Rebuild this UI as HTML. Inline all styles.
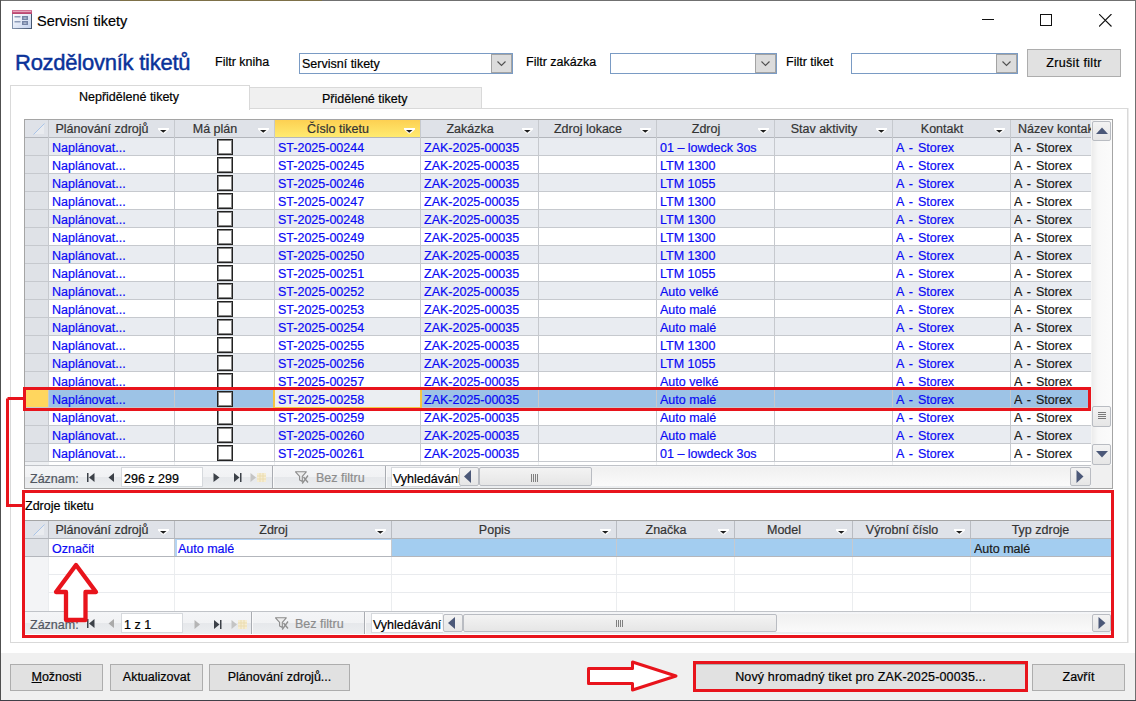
<!DOCTYPE html>
<html><head><meta charset="utf-8">
<style>
*{box-sizing:border-box;margin:0;padding:0}
html,body{width:1136px;height:701px;overflow:hidden;background:#fff}
body{position:relative;font-family:"Liberation Sans", sans-serif;font-size:12.5px;color:#000;-webkit-text-stroke:0.2px currentColor}
.a{position:absolute}
.t{position:absolute;white-space:nowrap;line-height:14px}
.combo{position:absolute;border:1px solid #7a9bc4;background:#fff;height:21px}
.dd{position:absolute;right:0;top:0;width:21px;height:19px;background:#dcdcdc;border:1px solid #a3a3a3}
.btn{position:absolute;background:#e1e1e1;border:1px solid #adadad;text-align:center;white-space:nowrap}
.hdr{position:absolute;top:120px;height:17px;background:#dfe2e8;overflow:hidden}
.ht{position:absolute;top:1px;line-height:14px;white-space:nowrap;color:#333;text-align:center}
.c{position:absolute;line-height:14px;white-space:nowrap;overflow:hidden;color:#1a1a1a}
.l{color:#0a0af5}
.vl{position:absolute;width:1px}
.hl{position:absolute;height:1px}
</style></head><body>

<div class="a" style="left:0;top:0;width:1136px;height:1px;background:#707070"></div>
<div class="a" style="left:120px;top:0;width:202px;height:1px;background:#7d7048"></div>
<div class="a" style="left:0;top:0;width:1px;height:701px;background:#505050"></div>
<div class="a" style="left:1135px;top:0;width:1px;height:701px;background:#707070"></div>
<div class="a" style="left:0;top:700px;width:1136px;height:1px;background:#404048"></div>
<svg class="a" style="left:12px;top:10px" width="20" height="19" viewBox="0 0 20 19">
<defs><linearGradient id="ig" x1="0" y1="0" x2="1" y2="1"><stop offset="0" stop-color="#ffffff"/><stop offset="1" stop-color="#c4d2ee"/></linearGradient>
<linearGradient id="ih" x1="0" y1="0" x2="0" y2="1"><stop offset="0" stop-color="#d77a9c"/><stop offset="1" stop-color="#b8426c"/></linearGradient>
<linearGradient id="if" x1="0" y1="0" x2="1" y2="0"><stop offset="0" stop-color="#8393ad"/><stop offset="1" stop-color="#44546e"/></linearGradient></defs>
<rect x="0" y="0" width="20" height="19" fill="url(#if)"/>
<rect x="1" y="4" width="18" height="14" fill="url(#ig)"/>
<rect x="0" y="0" width="20" height="4" fill="url(#ih)"/>
<rect x="1" y="1" width="18" height="1" fill="#e6a6bd"/>
<rect x="2.5" y="6" width="6" height="1.5" fill="#8d9bb8"/>
<rect x="2.5" y="11" width="6" height="1.5" fill="#8d9bb8"/>
<rect x="10" y="6" width="6" height="4" fill="#7584a6"/>
<rect x="11.5" y="7.5" width="3" height="1.2" fill="#c0cadd"/>
<rect x="10" y="11" width="6" height="4" fill="#7584a6"/>
<rect x="11.5" y="12.5" width="3" height="1.2" fill="#c0cadd"/>
</svg>
<div class="t" style="left:37px;top:13px;font-size:14.5px;line-height:16px">Servisní tikety</div>
<div class="a" style="left:982px;top:19px;width:12px;height:1px;background:#111"></div>
<div class="a" style="left:1040px;top:14px;width:12px;height:12px;border:1px solid #111"></div>
<svg class="a" style="left:1099px;top:14px" width="13" height="13" viewBox="0 0 13 13"><path d="M0 0L12.5 12.5M12.5 0L0 12.5" stroke="#111" stroke-width="1.1"/></svg>
<div class="t" style="left:15px;top:51px;font-size:22px;letter-spacing:-0.25px;line-height:24px;color:#0a3299;-webkit-text-stroke:0.45px #0a3299">Rozdělovník tiketů</div>
<div class="t" style="left:215px;top:55px">Filtr kniha</div>
<div class="combo" style="left:299px;top:53px;width:214px">
<div class="t" style="left:2px;top:3px">Servisní tikety</div>
<div class="dd"><svg width="19" height="19" viewBox="0 0 19 19" style="position:absolute;left:0;top:0"><path d="M5.5 6.5l4 4 4-4" fill="none" stroke="#505050" stroke-width="1.1"/></svg></div></div>
<div class="t" style="left:526px;top:55px">Filtr zakázka</div>
<div class="combo" style="left:610px;top:53px;width:167px">
<div class="dd"><svg width="19" height="19" viewBox="0 0 19 19" style="position:absolute;left:0;top:0"><path d="M5.5 6.5l4 4 4-4" fill="none" stroke="#505050" stroke-width="1.1"/></svg></div></div>
<div class="t" style="left:786px;top:55px">Filtr tiket</div>
<div class="combo" style="left:851px;top:53px;width:167px">
<div class="dd"><svg width="19" height="19" viewBox="0 0 19 19" style="position:absolute;left:0;top:0"><path d="M5.5 6.5l4 4 4-4" fill="none" stroke="#505050" stroke-width="1.1"/></svg></div></div>
<div class="btn" style="left:1027px;top:49px;width:94px;height:28px;line-height:26px;letter-spacing:0.35px">Zrušit filtr</div>
<div class="a" style="left:249px;top:87px;width:233px;height:22px;background:#f0f0f0;border:1px solid #d9d9d9;border-bottom:none"></div>
<div class="t" style="left:322px;top:92px">Přidělené tikety</div>
<div class="a" style="left:10px;top:108px;width:1118px;height:535px;border:1px solid #d9d9d9;background:#fff"></div>
<div class="a" style="left:1128px;top:108px;width:1px;height:535px;background:#ececec"></div>
<div class="a" style="left:10px;top:85px;width:240px;height:25px;border:1px solid #d9d9d9;border-bottom:none;background:#fff"></div>
<div class="t" style="left:79px;top:90px">Nepřidělené tikety</div>
<div class="a" style="left:24px;top:119px;width:1089px;height:370px;border:1px solid #a5a5a5;background:#fff"></div>
<div class="hdr" style="left:25px;width:23px"></div>
<svg class="a" style="left:32px;top:123px" width="14" height="12" viewBox="0 0 14 12"><path d="M12 1V11H2Z" fill="#e9ebef"/><path d="M12.5 0.5L1.5 11.5" stroke="#a9c4e8" stroke-width="1"/></svg>
<div class="hdr" style="left:49px;width:125px;background:#dfe2e8"></div>
<div class="ht" style="left:48px;top:122px;width:108px">Plánování zdrojů</div>
<svg class="a" style="left:158px;top:128px" width="11" height="6" viewBox="0 0 11 6"><path d="M0 0H11V1.5L6.5 5.5H4.5L0 1.5Z" fill="#fff"/><path d="M2 2H8.5L5.25 4.8Z" fill="#1e1e1e"/></svg>
<div class="hdr" style="left:175px;width:99px;background:#dfe2e8"></div>
<div class="ht" style="left:174px;top:122px;width:82px">Má plán</div>
<svg class="a" style="left:258px;top:128px" width="11" height="6" viewBox="0 0 11 6"><path d="M0 0H11V1.5L6.5 5.5H4.5L0 1.5Z" fill="#fff"/><path d="M2 2H8.5L5.25 4.8Z" fill="#1e1e1e"/></svg>
<div class="hdr" style="left:275px;width:145px;background:linear-gradient(#fdd052,#ffeb70)"></div>
<div class="ht" style="left:274px;top:122px;width:128px">Číslo tiketu</div>
<svg class="a" style="left:404px;top:128px" width="11" height="6" viewBox="0 0 11 6"><path d="M0 0H11V1.5L6.5 5.5H4.5L0 1.5Z" fill="#fff"/><path d="M2 2H8.5L5.25 4.8Z" fill="#1e1e1e"/></svg>
<div class="hdr" style="left:421px;width:117px;background:#dfe2e8"></div>
<div class="ht" style="left:420px;top:122px;width:100px">Zakázka</div>
<svg class="a" style="left:522px;top:128px" width="11" height="6" viewBox="0 0 11 6"><path d="M0 0H11V1.5L6.5 5.5H4.5L0 1.5Z" fill="#fff"/><path d="M2 2H8.5L5.25 4.8Z" fill="#1e1e1e"/></svg>
<div class="hdr" style="left:539px;width:117px;background:#dfe2e8"></div>
<div class="ht" style="left:538px;top:122px;width:100px">Zdroj lokace</div>
<svg class="a" style="left:640px;top:128px" width="11" height="6" viewBox="0 0 11 6"><path d="M0 0H11V1.5L6.5 5.5H4.5L0 1.5Z" fill="#fff"/><path d="M2 2H8.5L5.25 4.8Z" fill="#1e1e1e"/></svg>
<div class="hdr" style="left:657px;width:117px;background:#dfe2e8"></div>
<div class="ht" style="left:656px;top:122px;width:100px">Zdroj</div>
<svg class="a" style="left:758px;top:128px" width="11" height="6" viewBox="0 0 11 6"><path d="M0 0H11V1.5L6.5 5.5H4.5L0 1.5Z" fill="#fff"/><path d="M2 2H8.5L5.25 4.8Z" fill="#1e1e1e"/></svg>
<div class="hdr" style="left:775px;width:117px;background:#dfe2e8"></div>
<div class="ht" style="left:774px;top:122px;width:100px">Stav aktivity</div>
<svg class="a" style="left:876px;top:128px" width="11" height="6" viewBox="0 0 11 6"><path d="M0 0H11V1.5L6.5 5.5H4.5L0 1.5Z" fill="#fff"/><path d="M2 2H8.5L5.25 4.8Z" fill="#1e1e1e"/></svg>
<div class="hdr" style="left:893px;width:117px;background:#dfe2e8"></div>
<div class="ht" style="left:892px;top:122px;width:100px">Kontakt</div>
<svg class="a" style="left:994px;top:128px" width="11" height="6" viewBox="0 0 11 6"><path d="M0 0H11V1.5L6.5 5.5H4.5L0 1.5Z" fill="#fff"/><path d="M2 2H8.5L5.25 4.8Z" fill="#1e1e1e"/></svg>
<div class="hdr" style="left:1011px;width:80px;background:#dfe2e8"></div>
<div class="ht" style="left:1018px;top:122px;">Název kontaktu</div>
<div class="a" style="left:1091px;top:120px;width:21px;height:345px;background:#f4f4f4"></div>
<div class="hl" style="left:25px;top:137px;width:1066px;background:#b3b6bc"></div>
<div class="a" style="left:49px;top:138px;width:1042px;height:17px;background:#e9ecf1"></div>
<div class="a" style="left:25px;top:138px;width:23px;height:17px;background:#dfe2e7"></div>
<div class="hl" style="left:25px;top:155px;width:1066px;background:#c6c9ce"></div>
<div class="c l" style="left:52px;top:141px;width:122px">Naplánovat...</div>
<div class="a" style="left:217px;top:139px;width:16px;height:16px;border:1px solid #222;box-shadow:inset 0 0 0 1px rgba(40,40,40,0.55);background:#fff"></div>
<div class="c l" style="left:278px;top:141px;width:142px">ST-2025-00244</div>
<div class="c l" style="left:424px;top:141px;width:114px">ZAK-2025-00035</div>
<div class="c l" style="left:660px;top:141px;width:114px">01 – lowdeck 3os</div>
<div class="c l" style="left:896px;top:141px;width:114px"><span style="word-spacing:1.6px">A - Storex</span></div>
<div class="c" style="left:1014px;top:141px;width:77px"><span style="word-spacing:1.6px">A - Storex</span></div>
<div class="a" style="left:49px;top:156px;width:1042px;height:17px;background:#ffffff"></div>
<div class="a" style="left:25px;top:156px;width:23px;height:17px;background:#dfe2e7"></div>
<div class="hl" style="left:25px;top:173px;width:1066px;background:#c6c9ce"></div>
<div class="c l" style="left:52px;top:159px;width:122px">Naplánovat...</div>
<div class="a" style="left:217px;top:157px;width:16px;height:16px;border:1px solid #222;box-shadow:inset 0 0 0 1px rgba(40,40,40,0.55);background:#fff"></div>
<div class="c l" style="left:278px;top:159px;width:142px">ST-2025-00245</div>
<div class="c l" style="left:424px;top:159px;width:114px">ZAK-2025-00035</div>
<div class="c l" style="left:660px;top:159px;width:114px">LTM 1300</div>
<div class="c l" style="left:896px;top:159px;width:114px"><span style="word-spacing:1.6px">A - Storex</span></div>
<div class="c" style="left:1014px;top:159px;width:77px"><span style="word-spacing:1.6px">A - Storex</span></div>
<div class="a" style="left:49px;top:174px;width:1042px;height:17px;background:#e9ecf1"></div>
<div class="a" style="left:25px;top:174px;width:23px;height:17px;background:#dfe2e7"></div>
<div class="hl" style="left:25px;top:191px;width:1066px;background:#c6c9ce"></div>
<div class="c l" style="left:52px;top:177px;width:122px">Naplánovat...</div>
<div class="a" style="left:217px;top:175px;width:16px;height:16px;border:1px solid #222;box-shadow:inset 0 0 0 1px rgba(40,40,40,0.55);background:#fff"></div>
<div class="c l" style="left:278px;top:177px;width:142px">ST-2025-00246</div>
<div class="c l" style="left:424px;top:177px;width:114px">ZAK-2025-00035</div>
<div class="c l" style="left:660px;top:177px;width:114px">LTM 1055</div>
<div class="c l" style="left:896px;top:177px;width:114px"><span style="word-spacing:1.6px">A - Storex</span></div>
<div class="c" style="left:1014px;top:177px;width:77px"><span style="word-spacing:1.6px">A - Storex</span></div>
<div class="a" style="left:49px;top:192px;width:1042px;height:17px;background:#ffffff"></div>
<div class="a" style="left:25px;top:192px;width:23px;height:17px;background:#dfe2e7"></div>
<div class="hl" style="left:25px;top:209px;width:1066px;background:#c6c9ce"></div>
<div class="c l" style="left:52px;top:195px;width:122px">Naplánovat...</div>
<div class="a" style="left:217px;top:193px;width:16px;height:16px;border:1px solid #222;box-shadow:inset 0 0 0 1px rgba(40,40,40,0.55);background:#fff"></div>
<div class="c l" style="left:278px;top:195px;width:142px">ST-2025-00247</div>
<div class="c l" style="left:424px;top:195px;width:114px">ZAK-2025-00035</div>
<div class="c l" style="left:660px;top:195px;width:114px">LTM 1300</div>
<div class="c l" style="left:896px;top:195px;width:114px"><span style="word-spacing:1.6px">A - Storex</span></div>
<div class="c" style="left:1014px;top:195px;width:77px"><span style="word-spacing:1.6px">A - Storex</span></div>
<div class="a" style="left:49px;top:210px;width:1042px;height:17px;background:#e9ecf1"></div>
<div class="a" style="left:25px;top:210px;width:23px;height:17px;background:#dfe2e7"></div>
<div class="hl" style="left:25px;top:227px;width:1066px;background:#c6c9ce"></div>
<div class="c l" style="left:52px;top:213px;width:122px">Naplánovat...</div>
<div class="a" style="left:217px;top:211px;width:16px;height:16px;border:1px solid #222;box-shadow:inset 0 0 0 1px rgba(40,40,40,0.55);background:#fff"></div>
<div class="c l" style="left:278px;top:213px;width:142px">ST-2025-00248</div>
<div class="c l" style="left:424px;top:213px;width:114px">ZAK-2025-00035</div>
<div class="c l" style="left:660px;top:213px;width:114px">LTM 1300</div>
<div class="c l" style="left:896px;top:213px;width:114px"><span style="word-spacing:1.6px">A - Storex</span></div>
<div class="c" style="left:1014px;top:213px;width:77px"><span style="word-spacing:1.6px">A - Storex</span></div>
<div class="a" style="left:49px;top:228px;width:1042px;height:17px;background:#ffffff"></div>
<div class="a" style="left:25px;top:228px;width:23px;height:17px;background:#dfe2e7"></div>
<div class="hl" style="left:25px;top:245px;width:1066px;background:#c6c9ce"></div>
<div class="c l" style="left:52px;top:231px;width:122px">Naplánovat...</div>
<div class="a" style="left:217px;top:229px;width:16px;height:16px;border:1px solid #222;box-shadow:inset 0 0 0 1px rgba(40,40,40,0.55);background:#fff"></div>
<div class="c l" style="left:278px;top:231px;width:142px">ST-2025-00249</div>
<div class="c l" style="left:424px;top:231px;width:114px">ZAK-2025-00035</div>
<div class="c l" style="left:660px;top:231px;width:114px">LTM 1300</div>
<div class="c l" style="left:896px;top:231px;width:114px"><span style="word-spacing:1.6px">A - Storex</span></div>
<div class="c" style="left:1014px;top:231px;width:77px"><span style="word-spacing:1.6px">A - Storex</span></div>
<div class="a" style="left:49px;top:246px;width:1042px;height:17px;background:#e9ecf1"></div>
<div class="a" style="left:25px;top:246px;width:23px;height:17px;background:#dfe2e7"></div>
<div class="hl" style="left:25px;top:263px;width:1066px;background:#c6c9ce"></div>
<div class="c l" style="left:52px;top:249px;width:122px">Naplánovat...</div>
<div class="a" style="left:217px;top:247px;width:16px;height:16px;border:1px solid #222;box-shadow:inset 0 0 0 1px rgba(40,40,40,0.55);background:#fff"></div>
<div class="c l" style="left:278px;top:249px;width:142px">ST-2025-00250</div>
<div class="c l" style="left:424px;top:249px;width:114px">ZAK-2025-00035</div>
<div class="c l" style="left:660px;top:249px;width:114px">LTM 1300</div>
<div class="c l" style="left:896px;top:249px;width:114px"><span style="word-spacing:1.6px">A - Storex</span></div>
<div class="c" style="left:1014px;top:249px;width:77px"><span style="word-spacing:1.6px">A - Storex</span></div>
<div class="a" style="left:49px;top:264px;width:1042px;height:17px;background:#ffffff"></div>
<div class="a" style="left:25px;top:264px;width:23px;height:17px;background:#dfe2e7"></div>
<div class="hl" style="left:25px;top:281px;width:1066px;background:#c6c9ce"></div>
<div class="c l" style="left:52px;top:267px;width:122px">Naplánovat...</div>
<div class="a" style="left:217px;top:265px;width:16px;height:16px;border:1px solid #222;box-shadow:inset 0 0 0 1px rgba(40,40,40,0.55);background:#fff"></div>
<div class="c l" style="left:278px;top:267px;width:142px">ST-2025-00251</div>
<div class="c l" style="left:424px;top:267px;width:114px">ZAK-2025-00035</div>
<div class="c l" style="left:660px;top:267px;width:114px">LTM 1055</div>
<div class="c l" style="left:896px;top:267px;width:114px"><span style="word-spacing:1.6px">A - Storex</span></div>
<div class="c" style="left:1014px;top:267px;width:77px"><span style="word-spacing:1.6px">A - Storex</span></div>
<div class="a" style="left:49px;top:282px;width:1042px;height:17px;background:#e9ecf1"></div>
<div class="a" style="left:25px;top:282px;width:23px;height:17px;background:#dfe2e7"></div>
<div class="hl" style="left:25px;top:299px;width:1066px;background:#c6c9ce"></div>
<div class="c l" style="left:52px;top:285px;width:122px">Naplánovat...</div>
<div class="a" style="left:217px;top:283px;width:16px;height:16px;border:1px solid #222;box-shadow:inset 0 0 0 1px rgba(40,40,40,0.55);background:#fff"></div>
<div class="c l" style="left:278px;top:285px;width:142px">ST-2025-00252</div>
<div class="c l" style="left:424px;top:285px;width:114px">ZAK-2025-00035</div>
<div class="c l" style="left:660px;top:285px;width:114px">Auto velké</div>
<div class="c l" style="left:896px;top:285px;width:114px"><span style="word-spacing:1.6px">A - Storex</span></div>
<div class="c" style="left:1014px;top:285px;width:77px"><span style="word-spacing:1.6px">A - Storex</span></div>
<div class="a" style="left:49px;top:300px;width:1042px;height:17px;background:#ffffff"></div>
<div class="a" style="left:25px;top:300px;width:23px;height:17px;background:#dfe2e7"></div>
<div class="hl" style="left:25px;top:317px;width:1066px;background:#c6c9ce"></div>
<div class="c l" style="left:52px;top:303px;width:122px">Naplánovat...</div>
<div class="a" style="left:217px;top:301px;width:16px;height:16px;border:1px solid #222;box-shadow:inset 0 0 0 1px rgba(40,40,40,0.55);background:#fff"></div>
<div class="c l" style="left:278px;top:303px;width:142px">ST-2025-00253</div>
<div class="c l" style="left:424px;top:303px;width:114px">ZAK-2025-00035</div>
<div class="c l" style="left:660px;top:303px;width:114px">Auto malé</div>
<div class="c l" style="left:896px;top:303px;width:114px"><span style="word-spacing:1.6px">A - Storex</span></div>
<div class="c" style="left:1014px;top:303px;width:77px"><span style="word-spacing:1.6px">A - Storex</span></div>
<div class="a" style="left:49px;top:318px;width:1042px;height:17px;background:#e9ecf1"></div>
<div class="a" style="left:25px;top:318px;width:23px;height:17px;background:#dfe2e7"></div>
<div class="hl" style="left:25px;top:335px;width:1066px;background:#c6c9ce"></div>
<div class="c l" style="left:52px;top:321px;width:122px">Naplánovat...</div>
<div class="a" style="left:217px;top:319px;width:16px;height:16px;border:1px solid #222;box-shadow:inset 0 0 0 1px rgba(40,40,40,0.55);background:#fff"></div>
<div class="c l" style="left:278px;top:321px;width:142px">ST-2025-00254</div>
<div class="c l" style="left:424px;top:321px;width:114px">ZAK-2025-00035</div>
<div class="c l" style="left:660px;top:321px;width:114px">Auto malé</div>
<div class="c l" style="left:896px;top:321px;width:114px"><span style="word-spacing:1.6px">A - Storex</span></div>
<div class="c" style="left:1014px;top:321px;width:77px"><span style="word-spacing:1.6px">A - Storex</span></div>
<div class="a" style="left:49px;top:336px;width:1042px;height:17px;background:#ffffff"></div>
<div class="a" style="left:25px;top:336px;width:23px;height:17px;background:#dfe2e7"></div>
<div class="hl" style="left:25px;top:353px;width:1066px;background:#c6c9ce"></div>
<div class="c l" style="left:52px;top:339px;width:122px">Naplánovat...</div>
<div class="a" style="left:217px;top:337px;width:16px;height:16px;border:1px solid #222;box-shadow:inset 0 0 0 1px rgba(40,40,40,0.55);background:#fff"></div>
<div class="c l" style="left:278px;top:339px;width:142px">ST-2025-00255</div>
<div class="c l" style="left:424px;top:339px;width:114px">ZAK-2025-00035</div>
<div class="c l" style="left:660px;top:339px;width:114px">LTM 1300</div>
<div class="c l" style="left:896px;top:339px;width:114px"><span style="word-spacing:1.6px">A - Storex</span></div>
<div class="c" style="left:1014px;top:339px;width:77px"><span style="word-spacing:1.6px">A - Storex</span></div>
<div class="a" style="left:49px;top:354px;width:1042px;height:17px;background:#e9ecf1"></div>
<div class="a" style="left:25px;top:354px;width:23px;height:17px;background:#dfe2e7"></div>
<div class="hl" style="left:25px;top:371px;width:1066px;background:#c6c9ce"></div>
<div class="c l" style="left:52px;top:357px;width:122px">Naplánovat...</div>
<div class="a" style="left:217px;top:355px;width:16px;height:16px;border:1px solid #222;box-shadow:inset 0 0 0 1px rgba(40,40,40,0.55);background:#fff"></div>
<div class="c l" style="left:278px;top:357px;width:142px">ST-2025-00256</div>
<div class="c l" style="left:424px;top:357px;width:114px">ZAK-2025-00035</div>
<div class="c l" style="left:660px;top:357px;width:114px">LTM 1055</div>
<div class="c l" style="left:896px;top:357px;width:114px"><span style="word-spacing:1.6px">A - Storex</span></div>
<div class="c" style="left:1014px;top:357px;width:77px"><span style="word-spacing:1.6px">A - Storex</span></div>
<div class="a" style="left:49px;top:372px;width:1042px;height:17px;background:#ffffff"></div>
<div class="a" style="left:25px;top:372px;width:23px;height:17px;background:#dfe2e7"></div>
<div class="hl" style="left:25px;top:389px;width:1066px;background:#c6c9ce"></div>
<div class="c l" style="left:52px;top:375px;width:122px">Naplánovat...</div>
<div class="a" style="left:217px;top:373px;width:16px;height:16px;border:1px solid #222;box-shadow:inset 0 0 0 1px rgba(40,40,40,0.55);background:#fff"></div>
<div class="c l" style="left:278px;top:375px;width:142px">ST-2025-00257</div>
<div class="c l" style="left:424px;top:375px;width:114px">ZAK-2025-00035</div>
<div class="c l" style="left:660px;top:375px;width:114px">Auto velké</div>
<div class="c l" style="left:896px;top:375px;width:114px"><span style="word-spacing:1.6px">A - Storex</span></div>
<div class="c" style="left:1014px;top:375px;width:77px"><span style="word-spacing:1.6px">A - Storex</span></div>
<div class="a" style="left:49px;top:390px;width:1042px;height:17px;background:#9dc3e6"></div>
<div class="a" style="left:25px;top:390px;width:23px;height:17px;background:#ffd65e"></div>
<div class="hl" style="left:25px;top:407px;width:1066px;background:#c6c9ce"></div>
<div class="c l" style="left:52px;top:393px;width:122px">Naplánovat...</div>
<div class="a" style="left:217px;top:391px;width:16px;height:16px;border:1px solid #222;box-shadow:inset 0 0 0 1px rgba(40,40,40,0.55);background:#fff"></div>
<div class="a" style="left:274px;top:390px;width:146px;height:18px;background:#ebeef2"></div>
<div class="c l" style="left:278px;top:393px;width:142px">ST-2025-00258</div>
<div class="c l" style="left:424px;top:393px;width:114px">ZAK-2025-00035</div>
<div class="c l" style="left:660px;top:393px;width:114px">Auto malé</div>
<div class="c l" style="left:896px;top:393px;width:114px"><span style="word-spacing:1.6px">A - Storex</span></div>
<div class="c" style="left:1014px;top:393px;width:77px"><span style="word-spacing:1.6px">A - Storex</span></div>
<div class="a" style="left:49px;top:408px;width:1042px;height:17px;background:#ffffff"></div>
<div class="a" style="left:25px;top:408px;width:23px;height:17px;background:#dfe2e7"></div>
<div class="hl" style="left:25px;top:425px;width:1066px;background:#c6c9ce"></div>
<div class="c l" style="left:52px;top:411px;width:122px">Naplánovat...</div>
<div class="a" style="left:217px;top:409px;width:16px;height:16px;border:1px solid #222;box-shadow:inset 0 0 0 1px rgba(40,40,40,0.55);background:#fff"></div>
<div class="c l" style="left:278px;top:411px;width:142px">ST-2025-00259</div>
<div class="c l" style="left:424px;top:411px;width:114px">ZAK-2025-00035</div>
<div class="c l" style="left:660px;top:411px;width:114px">Auto malé</div>
<div class="c l" style="left:896px;top:411px;width:114px"><span style="word-spacing:1.6px">A - Storex</span></div>
<div class="c" style="left:1014px;top:411px;width:77px"><span style="word-spacing:1.6px">A - Storex</span></div>
<div class="a" style="left:49px;top:426px;width:1042px;height:17px;background:#e9ecf1"></div>
<div class="a" style="left:25px;top:426px;width:23px;height:17px;background:#dfe2e7"></div>
<div class="hl" style="left:25px;top:443px;width:1066px;background:#c6c9ce"></div>
<div class="c l" style="left:52px;top:429px;width:122px">Naplánovat...</div>
<div class="a" style="left:217px;top:427px;width:16px;height:16px;border:1px solid #222;box-shadow:inset 0 0 0 1px rgba(40,40,40,0.55);background:#fff"></div>
<div class="c l" style="left:278px;top:429px;width:142px">ST-2025-00260</div>
<div class="c l" style="left:424px;top:429px;width:114px">ZAK-2025-00035</div>
<div class="c l" style="left:660px;top:429px;width:114px">Auto malé</div>
<div class="c l" style="left:896px;top:429px;width:114px"><span style="word-spacing:1.6px">A - Storex</span></div>
<div class="c" style="left:1014px;top:429px;width:77px"><span style="word-spacing:1.6px">A - Storex</span></div>
<div class="a" style="left:49px;top:444px;width:1042px;height:17px;background:#ffffff"></div>
<div class="a" style="left:25px;top:444px;width:23px;height:17px;background:#dfe2e7"></div>
<div class="hl" style="left:25px;top:461px;width:1066px;background:#c6c9ce"></div>
<div class="c l" style="left:52px;top:447px;width:122px">Naplánovat...</div>
<div class="a" style="left:217px;top:445px;width:16px;height:16px;border:1px solid #222;box-shadow:inset 0 0 0 1px rgba(40,40,40,0.55);background:#fff"></div>
<div class="c l" style="left:278px;top:447px;width:142px">ST-2025-00261</div>
<div class="c l" style="left:424px;top:447px;width:114px">ZAK-2025-00035</div>
<div class="c l" style="left:660px;top:447px;width:114px">01 – lowdeck 3os</div>
<div class="c l" style="left:896px;top:447px;width:114px"><span style="word-spacing:1.6px">A - Storex</span></div>
<div class="c" style="left:1014px;top:447px;width:77px"><span style="word-spacing:1.6px">A - Storex</span></div>
<div class="vl" style="left:48px;top:120px;height:342px;background:#c6c9ce"></div>
<div class="vl" style="left:48px;top:462px;height:3px;background:#eceef0"></div>
<div class="vl" style="left:174px;top:120px;height:342px;background:#c6c9ce"></div>
<div class="vl" style="left:174px;top:462px;height:3px;background:#eceef0"></div>
<div class="vl" style="left:274px;top:120px;height:342px;background:#c6c9ce"></div>
<div class="vl" style="left:274px;top:462px;height:3px;background:#eceef0"></div>
<div class="vl" style="left:420px;top:120px;height:342px;background:#c6c9ce"></div>
<div class="vl" style="left:420px;top:462px;height:3px;background:#eceef0"></div>
<div class="vl" style="left:538px;top:120px;height:342px;background:#c6c9ce"></div>
<div class="vl" style="left:538px;top:462px;height:3px;background:#eceef0"></div>
<div class="vl" style="left:656px;top:120px;height:342px;background:#c6c9ce"></div>
<div class="vl" style="left:656px;top:462px;height:3px;background:#eceef0"></div>
<div class="vl" style="left:774px;top:120px;height:342px;background:#c6c9ce"></div>
<div class="vl" style="left:774px;top:462px;height:3px;background:#eceef0"></div>
<div class="vl" style="left:892px;top:120px;height:342px;background:#c6c9ce"></div>
<div class="vl" style="left:892px;top:462px;height:3px;background:#eceef0"></div>
<div class="vl" style="left:1010px;top:120px;height:342px;background:#c6c9ce"></div>
<div class="vl" style="left:1010px;top:462px;height:3px;background:#eceef0"></div>
<div class="a" style="left:273px;top:390px;width:2px;height:18px;background:#f5c542"></div><div class="a" style="left:273px;top:407px;width:149px;height:1px;background:#f5c542"></div><div class="a" style="left:420px;top:390px;width:2px;height:18px;background:#f5c542"></div>
<div class="a" style="left:25px;top:462px;width:23px;height:3px;background:#eef0f3"></div>
<div class="a" style="left:1092px;top:120px;width:20px;height:345px;background:linear-gradient(90deg,#ececec,#f8f8f8 30%,#fbfbfb)"></div>
<div class="a" style="left:1092px;top:121px;width:19px;height:20px;background:linear-gradient(#f3f3f3,#e6e6e6);border:1px solid #b9bcc2;border-radius:2px"></div>
<svg class="a" style="left:1096px;top:127px" width="12" height="7"><path d="M0 7L6 0.5L12 7Z" fill="#4b5878"/></svg>
<div class="a" style="left:1092px;top:406px;width:19px;height:21px;background:linear-gradient(#f3f3f3,#e6e6e6);border:1px solid #b9bcc2;border-radius:2px"></div>
<svg class="a" style="left:1097px;top:412px" width="10" height="8"><path d="M1 0.5H9M1 2.5H9M1 4.5H9M1 6.5H9" stroke="#7a7a7a" stroke-width="1"/></svg>
<div class="a" style="left:1092px;top:444px;width:19px;height:21px;background:linear-gradient(#f3f3f3,#e6e6e6);border:1px solid #b9bcc2;border-radius:2px"></div>
<svg class="a" style="left:1096px;top:451px" width="12" height="7"><path d="M0 0L6 6.5L12 0Z" fill="#4b5878"/></svg>
<div class="hl" style="left:25px;top:465px;width:1067px;background:#c0c3c8"></div>
<div class="a" style="left:25px;top:466px;width:1067px;height:22px;background:linear-gradient(#f4f5f7 0%,#f1f2f4 50%,#e6e8eb 51%,#eceef0 100%)"></div>
<div class="t" style="left:30px;top:472px;color:#505660">Záznam:</div>
<svg class="a" style="left:87px;top:473px" width="8" height="9"><rect x="0" y="0" width="1.5" height="9" fill="#3c4148"/><path d="M7.5 0V9L2 4.5Z" fill="#3c4148"/></svg>
<svg class="a" style="left:108px;top:473px" width="7" height="9"><path d="M6 0V9L0.5 4.5Z" fill="#3c4148"/></svg>
<div class="a" style="left:121px;top:467px;width:82px;height:20px;background:#fff;border:1px solid #d6d9dd"></div>
<div class="t" style="left:124px;top:472px">296 z 299</div>
<svg class="a" style="left:213px;top:473px" width="7" height="9"><path d="M0.5 0V9L6.5 4.5Z" fill="#3c4148"/></svg>
<svg class="a" style="left:234px;top:473px" width="8" height="9"><path d="M0 0V9L5.5 4.5Z" fill="#3c4148"/><rect x="6" y="0" width="1.5" height="9" fill="#3c4148"/></svg>
<svg class="a" style="left:250px;top:473px" width="16" height="9"><path d="M0.5 0V9L6 4.5Z" fill="#c4c4c4"/><rect x="7" y="0" width="9" height="9" fill="#f6edd2"/><path d="M7 3H16M7 6H16M10 0V9M13 0V9" stroke="#ebdcb0" stroke-width="1"/></svg>
<div class="vl" style="left:272px;top:466px;height:22px;background:#a9acb2"></div>
<div class="vl" style="left:273px;top:466px;height:22px;background:#fafafa"></div>
<svg class="a" style="left:295px;top:471px" width="15" height="14"><path d="M0.5 0.8H11.3L7.3 5.3V10.5L4.6 9V5.3Z" fill="#ececec" stroke="#8c8c8c" stroke-width="1.1" stroke-linejoin="round"/><path d="M7.2 12.5L13 4.5M8.5 6L13 11.5" stroke="#8e8e8e" stroke-width="1.3"/></svg>
<div class="t" style="left:316px;top:471px;color:#8c8c8c">Bez filtru</div>
<div class="vl" style="left:385px;top:466px;height:22px;background:#a9acb2"></div>
<div class="vl" style="left:386px;top:466px;height:22px;background:#fafafa"></div>
<div class="a" style="left:391px;top:467px;width:70px;height:20px;background:#fff;border:1px solid #d6d9dd;overflow:hidden"><div class="t" style="left:1px;top:4px">Vyhledávání</div></div>
<div class="a" style="left:459px;top:467px;width:632px;height:19px;background:linear-gradient(#f0f0f0,#fafafa)"></div>
<div class="a" style="left:459px;top:467px;width:20px;height:19px;background:linear-gradient(#f3f3f3,#e6e6e6);border:1px solid #b9bcc2;border-radius:2px"></div>
<svg class="a" style="left:464px;top:470px" width="8" height="13"><path d="M7 0V13L0 6.5Z" fill="#4b5878"/></svg>
<div class="a" style="left:479px;top:467px;width:113px;height:19px;background:linear-gradient(#f3f3f3,#e6e6e6);border:1px solid #b9bcc2;border-radius:2px"></div>
<svg class="a" style="left:531px;top:474px" width="8" height="8"><path d="M0.5 0V8M2.5 0V8M4.5 0V8M6.5 0V8" stroke="#808080" stroke-width="1"/></svg>
<div class="a" style="left:1070px;top:467px;width:21px;height:19px;background:linear-gradient(#f3f3f3,#e6e6e6);border:1px solid #b9bcc2;border-radius:2px"></div>
<svg class="a" style="left:1076px;top:470px" width="8" height="13"><path d="M0.5 0V13L7.5 6.5Z" fill="#4b5878"/></svg>
<div class="a" style="left:1091px;top:465px;width:21px;height:23px;background:#f0f0f0"></div>
<div class="t" style="left:25px;top:499px">Zdroje tiketu</div>
<div class="a" style="left:24px;top:520px;width:1088px;height:117px;border:1px solid #a5a5a5;background:#fff"></div>
<div class="hdr" style="left:25px;top:521px;width:23px"></div>
<svg class="a" style="left:32px;top:524px" width="14" height="12" viewBox="0 0 14 12"><path d="M12 1V11H2Z" fill="#e9ebef"/><path d="M12.5 0.5L1.5 11.5" stroke="#a9c4e8" stroke-width="1"/></svg>
<div class="hdr" style="left:49px;top:521px;width:125px"></div>
<div class="ht" style="left:48px;top:523px;width:108px">Plánování zdrojů</div>
<svg class="a" style="left:158px;top:529px" width="11" height="6" viewBox="0 0 11 6"><path d="M0 0H11V1.5L6.5 5.5H4.5L0 1.5Z" fill="#fff"/><path d="M2 2H8.5L5.25 4.8Z" fill="#1e1e1e"/></svg>
<div class="hdr" style="left:175px;top:521px;width:216px"></div>
<div class="ht" style="left:174px;top:523px;width:199px">Zdroj</div>
<svg class="a" style="left:375px;top:529px" width="11" height="6" viewBox="0 0 11 6"><path d="M0 0H11V1.5L6.5 5.5H4.5L0 1.5Z" fill="#fff"/><path d="M2 2H8.5L5.25 4.8Z" fill="#1e1e1e"/></svg>
<div class="hdr" style="left:392px;top:521px;width:224px"></div>
<div class="ht" style="left:391px;top:523px;width:207px">Popis</div>
<svg class="a" style="left:600px;top:529px" width="11" height="6" viewBox="0 0 11 6"><path d="M0 0H11V1.5L6.5 5.5H4.5L0 1.5Z" fill="#fff"/><path d="M2 2H8.5L5.25 4.8Z" fill="#1e1e1e"/></svg>
<div class="hdr" style="left:617px;top:521px;width:117px"></div>
<div class="ht" style="left:616px;top:523px;width:100px">Značka</div>
<svg class="a" style="left:718px;top:529px" width="11" height="6" viewBox="0 0 11 6"><path d="M0 0H11V1.5L6.5 5.5H4.5L0 1.5Z" fill="#fff"/><path d="M2 2H8.5L5.25 4.8Z" fill="#1e1e1e"/></svg>
<div class="hdr" style="left:735px;top:521px;width:117px"></div>
<div class="ht" style="left:734px;top:523px;width:100px">Model</div>
<svg class="a" style="left:836px;top:529px" width="11" height="6" viewBox="0 0 11 6"><path d="M0 0H11V1.5L6.5 5.5H4.5L0 1.5Z" fill="#fff"/><path d="M2 2H8.5L5.25 4.8Z" fill="#1e1e1e"/></svg>
<div class="hdr" style="left:853px;top:521px;width:117px"></div>
<div class="ht" style="left:852px;top:523px;width:100px">Výrobní číslo</div>
<svg class="a" style="left:954px;top:529px" width="11" height="6" viewBox="0 0 11 6"><path d="M0 0H11V1.5L6.5 5.5H4.5L0 1.5Z" fill="#fff"/><path d="M2 2H8.5L5.25 4.8Z" fill="#1e1e1e"/></svg>
<div class="hdr" style="left:971px;top:521px;width:140px"></div>
<div class="ht" style="left:970px;top:523px;width:141px">Typ zdroje</div>
<div class="vl" style="left:48px;top:521px;height:90px;background:#ebedef"></div>
<div class="vl" style="left:48px;top:521px;height:17px;background:#b9bcc2"></div>
<div class="vl" style="left:174px;top:521px;height:90px;background:#ebedef"></div>
<div class="vl" style="left:174px;top:521px;height:17px;background:#b9bcc2"></div>
<div class="vl" style="left:391px;top:521px;height:90px;background:#ebedef"></div>
<div class="vl" style="left:391px;top:521px;height:17px;background:#b9bcc2"></div>
<div class="vl" style="left:616px;top:521px;height:90px;background:#ebedef"></div>
<div class="vl" style="left:616px;top:521px;height:17px;background:#b9bcc2"></div>
<div class="vl" style="left:734px;top:521px;height:90px;background:#ebedef"></div>
<div class="vl" style="left:734px;top:521px;height:17px;background:#b9bcc2"></div>
<div class="vl" style="left:852px;top:521px;height:90px;background:#ebedef"></div>
<div class="vl" style="left:852px;top:521px;height:17px;background:#b9bcc2"></div>
<div class="vl" style="left:970px;top:521px;height:90px;background:#ebedef"></div>
<div class="vl" style="left:970px;top:521px;height:17px;background:#b9bcc2"></div>
<div class="hl" style="left:25px;top:538px;width:1086px;background:#b3b6bc"></div>
<div class="a" style="left:49px;top:539px;width:1062px;height:17px;background:#a3cdf0"></div>
<div class="a" style="left:25px;top:539px;width:23px;height:17px;background:#dfe2e7"></div>
<div class="a" style="left:48px;top:539px;width:127px;height:17px;background:#fff;border-left:1px solid #c6c9ce"></div>
<div class="a" style="left:175px;top:539px;width:216px;height:17px;background:#fff;border-left:2px solid #b4d4f4;border-top:1px solid #b4d4f4"></div>
<div class="vl" style="left:174px;top:539px;height:17px;background:#c6c9ce"></div>
<div class="vl" style="left:391px;top:539px;height:17px;background:#c6c9ce"></div>
<div class="vl" style="left:616px;top:539px;height:17px;background:#c6c9ce"></div>
<div class="vl" style="left:734px;top:539px;height:17px;background:#c6c9ce"></div>
<div class="vl" style="left:852px;top:539px;height:17px;background:#c6c9ce"></div>
<div class="vl" style="left:970px;top:539px;height:17px;background:#c6c9ce"></div>
<div class="hl" style="left:25px;top:556px;width:1086px;background:#b3b6bc"></div>
<div class="c l" style="left:52px;top:542px">Označit</div>
<div class="c l" style="left:178px;top:542px">Auto malé</div>
<div class="c" style="left:974px;top:542px">Auto malé</div>
<div class="hl" style="left:25px;top:574px;width:1086px;background:#e9ebee"></div>
<div class="hl" style="left:25px;top:592px;width:1086px;background:#e9ebee"></div>
<div class="a" style="left:25px;top:557px;width:23px;height:54px;background:#f3f4f6"></div>
<div class="hl" style="left:25px;top:611px;width:1086px;background:#c0c3c8"></div>
<div class="a" style="left:25px;top:612px;width:1086px;height:22px;background:linear-gradient(#f4f5f7 0%,#f1f2f4 50%,#e6e8eb 51%,#eceef0 100%)"></div>
<div class="t" style="left:30px;top:618px;color:#505660">Záznam:</div>
<svg class="a" style="left:87px;top:619px" width="8" height="9"><rect x="0" y="0" width="1.5" height="9" fill="#3c4148"/><path d="M7.5 0V9L2 4.5Z" fill="#3c4148"/></svg>
<svg class="a" style="left:108px;top:619px" width="7" height="9"><path d="M6 0V9L0.5 4.5Z" fill="#aaa"/></svg>
<div class="a" style="left:121px;top:613px;width:62px;height:20px;background:#fff;border:1px solid #d6d9dd"></div>
<div class="t" style="left:124px;top:618px">1 z 1</div>
<svg class="a" style="left:194px;top:620px" width="7" height="9"><path d="M0.5 0V9L6 4.5Z" fill="#b5b5b5"/></svg>
<svg class="a" style="left:214px;top:620px" width="8" height="9"><path d="M0 0V9L5.5 4.5Z" fill="#3c4148"/><rect x="6" y="0" width="1.5" height="9" fill="#3c4148"/></svg>
<svg class="a" style="left:231px;top:620px" width="16" height="9"><path d="M0.5 0V9L6 4.5Z" fill="#c4c4c4"/><rect x="7" y="0" width="9" height="9" fill="#f6edd2"/><path d="M7 3H16M7 6H16M10 0V9M13 0V9" stroke="#ebdcb0" stroke-width="1"/></svg>
<div class="vl" style="left:251px;top:612px;height:22px;background:#a9acb2"></div>
<div class="vl" style="left:252px;top:612px;height:22px;background:#fafafa"></div>
<svg class="a" style="left:275px;top:617px" width="15" height="14"><path d="M0.5 0.8H11.3L7.3 5.3V10.5L4.6 9V5.3Z" fill="#ececec" stroke="#8c8c8c" stroke-width="1.1" stroke-linejoin="round"/><path d="M7.2 12.5L13 4.5M8.5 6L13 11.5" stroke="#8e8e8e" stroke-width="1.3"/></svg>
<div class="t" style="left:295px;top:617px;color:#8c8c8c">Bez filtru</div>
<div class="vl" style="left:364px;top:612px;height:22px;background:#a9acb2"></div>
<div class="vl" style="left:365px;top:612px;height:22px;background:#fafafa"></div>
<div class="a" style="left:371px;top:613px;width:72px;height:20px;background:#fff;border:1px solid #d6d9dd;overflow:hidden"><div class="t" style="left:1px;top:4px">Vyhledávání</div></div>
<div class="a" style="left:442px;top:614px;width:669px;height:18px;background:linear-gradient(#f0f0f0,#fafafa)"></div>
<div class="a" style="left:443px;top:614px;width:20px;height:18px;background:linear-gradient(#f3f3f3,#e6e6e6);border:1px solid #b9bcc2;border-radius:2px"></div>
<svg class="a" style="left:448px;top:617px" width="8" height="12"><path d="M7 0V12L0 6Z" fill="#4b5878"/></svg>
<div class="a" style="left:463px;top:614px;width:314px;height:18px;background:linear-gradient(#f3f3f3,#e6e6e6);border:1px solid #b9bcc2;border-radius:2px"></div>
<svg class="a" style="left:616px;top:620px" width="8" height="7"><path d="M0.5 0V7M2.5 0V7M4.5 0V7M6.5 0V7" stroke="#808080" stroke-width="1"/></svg>
<div class="a" style="left:1092px;top:614px;width:19px;height:18px;background:linear-gradient(#f3f3f3,#e6e6e6);border:1px solid #b9bcc2;border-radius:2px"></div>
<svg class="a" style="left:1098px;top:617px" width="8" height="12"><path d="M0.5 0V12L7.5 6Z" fill="#4b5878"/></svg>
<div class="a" style="left:1px;top:653px;width:1134px;height:47px;background:#f0f0f0"></div>
<div class="btn" style="left:10px;top:664px;width:93px;height:27px;line-height:25px"><u>M</u>ožnosti</div>
<div class="btn" style="left:110px;top:664px;width:93px;height:27px;line-height:25px">Aktualizovat</div>
<div class="btn" style="left:209px;top:664px;width:141px;height:27px;line-height:25px">Plánování zdrojů...</div>
<div class="btn" style="left:694px;top:664px;width:333px;height:27px;line-height:25px"><span style="letter-spacing:0.15px">Nový hromadný tiket pro ZAK-2025-00035...</span></div>
<div class="btn" style="left:1032px;top:664px;width:93px;height:27px;line-height:25px">Zavřít</div>
<svg class="a" style="left:0;top:0" width="1136" height="701">
<g fill="none" stroke="#e8141c" stroke-width="3">
<rect x="24.5" y="388.5" width="1065" height="21"/>
<rect x="23.5" y="491.5" width="1089" height="145"/>
<path d="M7.5 398.5V505.5H23"/>
<path d="M24.5 398.5H7.5"/>
<rect x="694.5" y="662.5" width="332" height="28"/>
<path d="M588.5 668.5H632.5V662L676 676L632.5 690V683.5H588.5Z" fill="#fff" stroke-linejoin="round"/>
</g>
<path d="M76 565L96 592H85.5V620H66V592H56Z" fill="#fff" stroke="#e8141c" stroke-width="4.3" stroke-linejoin="round"/>
</svg>
</body></html>
